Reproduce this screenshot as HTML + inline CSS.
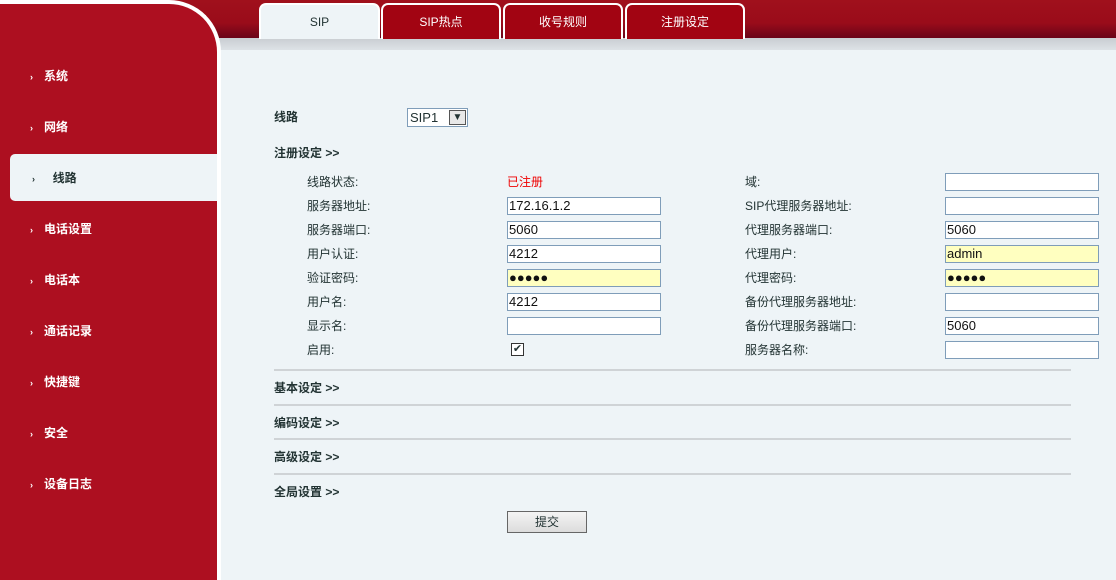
<!DOCTYPE html>
<html><head><meta charset="utf-8"><style>
*{margin:0;padding:0;box-sizing:border-box}
body{width:1116px;height:569px;overflow:hidden;position:relative;background:#eef4f7;font-family:"Liberation Sans","Noto Sans CJK SC",sans-serif;font-size:12px;color:#233;}
.top{position:absolute;left:0;top:0;width:1116px;height:38px;background:linear-gradient(#a0101c,#9a0c1a 60%,#6a0418);}
.band{position:absolute;left:0;top:38px;width:1116px;height:12px;background:linear-gradient(#c9cdd2,#dde2e6);}
.side{position:absolute;left:0;top:0;width:221px;height:580px;background:#ad0f20;border:4px solid #fff;border-left:none;border-bottom:none;border-top-right-radius:52px;}
.nav{position:absolute;left:30px;color:#fff;font-weight:bold;font-size:12px}
.nav b{font-size:9px;margin-right:11px}
.sel{position:absolute;left:10px;top:154px;width:207px;height:47px;background:#eef4f7;border-radius:5px 0 0 5px}
.tab{position:absolute;top:3px;height:36px;border:2px solid #fff;border-bottom:none;border-radius:7px 7px 0 0;background:#a20412;color:#fff;text-align:center;line-height:34px;font-size:12px}
.lbl{position:absolute;font-size:12px;color:#233}
.b{font-weight:bold}
.in{position:absolute;width:154px;height:18px;border:1px solid #7f9db9;background:#fff;font-size:13px;line-height:16px;padding-left:1px;color:#111}
.y{background:#ffffc0}
.hr{position:absolute;left:274px;width:797px;height:2px;background:#cfd3d6}
</style></head><body>
<div class="top"></div><div class="band"></div>
<div class="side"></div>
<div class="sel"></div>
<div class="nav" style="top:67px"><b>›</b>系统</div>
<div class="nav" style="top:118px"><b>›</b>网络</div>
<div class="nav" style="top:169px;left:32px;color:#233"><b>›</b>&nbsp;&nbsp;线路</div>
<div class="nav" style="top:220px"><b>›</b>电话设置</div>
<div class="nav" style="top:271px"><b>›</b>电话本</div>
<div class="nav" style="top:322px"><b>›</b>通话记录</div>
<div class="nav" style="top:373px"><b>›</b>快捷键</div>
<div class="nav" style="top:424px"><b>›</b>安全</div>
<div class="nav" style="top:475px"><b>›</b>设备日志</div>
<div class="tab" style="left:259px;width:121px;background:#eef4f7;color:#233;height:36px">SIP</div>
<div class="tab" style="left:381px;width:120px">SIP热点</div>
<div class="tab" style="left:503px;width:120px">收号规则</div>
<div class="tab" style="left:625px;width:120px">注册设定</div>
<div class="lbl b" style="left:274px;top:108px">线路</div>
<div style="position:absolute;left:407px;top:108px;width:61px;height:19px;border:1px solid #7f9db9;background:#fff;font-size:13px;line-height:17px;padding-left:2px">SIP1<span style="position:absolute;right:1px;top:1px;width:17px;height:15px;background:#e8e8e8;border:1px solid #555;font-size:10px;line-height:13px;text-align:center">▼</span></div>
<div class="lbl b" style="left:274px;top:144px">注册设定 &gt;&gt;</div>
<div class="lbl" style="left:307px;top:173px">线路状态:</div><div class="lbl" style="left:507px;top:173px;color:#e00">已注册</div>
<div class="lbl" style="left:307px;top:197px">服务器地址:</div><div class="in" style="left:507px;top:197px">172.16.1.2</div>
<div class="lbl" style="left:307px;top:221px">服务器端口:</div><div class="in" style="left:507px;top:221px">5060</div>
<div class="lbl" style="left:307px;top:245px">用户认证:</div><div class="in" style="left:507px;top:245px">4212</div>
<div class="lbl" style="left:307px;top:269px">验证密码:</div><div class="in y" style="left:507px;top:269px">●●●●●</div>
<div class="lbl" style="left:307px;top:293px">用户名:</div><div class="in" style="left:507px;top:293px">4212</div>
<div class="lbl" style="left:307px;top:317px">显示名:</div><div class="in" style="left:507px;top:317px"></div>
<div class="lbl" style="left:307px;top:341px">启用:</div>
<div style="position:absolute;left:511px;top:343px;width:13px;height:13px;border:1px solid #333;background:#fff;font-size:11px;line-height:11px;text-align:center">✔</div>
<div class="lbl" style="left:745px;top:173px">域:</div><div class="in" style="left:945px;top:173px"></div>
<div class="lbl" style="left:745px;top:197px">SIP代理服务器地址:</div><div class="in" style="left:945px;top:197px"></div>
<div class="lbl" style="left:745px;top:221px">代理服务器端口:</div><div class="in" style="left:945px;top:221px">5060</div>
<div class="lbl" style="left:745px;top:245px">代理用户:</div><div class="in y" style="left:945px;top:245px">admin</div>
<div class="lbl" style="left:745px;top:269px">代理密码:</div><div class="in y" style="left:945px;top:269px">●●●●●</div>
<div class="lbl" style="left:745px;top:293px">备份代理服务器地址:</div><div class="in" style="left:945px;top:293px"></div>
<div class="lbl" style="left:745px;top:317px">备份代理服务器端口:</div><div class="in" style="left:945px;top:317px">5060</div>
<div class="lbl" style="left:745px;top:341px">服务器名称:</div><div class="in" style="left:945px;top:341px"></div>
<div class="hr" style="top:369px"></div>
<div class="lbl b" style="left:274px;top:379px">基本设定 &gt;&gt;</div>
<div class="hr" style="top:404px"></div>
<div class="lbl b" style="left:274px;top:414px">编码设定 &gt;&gt;</div>
<div class="hr" style="top:438px"></div>
<div class="lbl b" style="left:274px;top:448px">高级设定 &gt;&gt;</div>
<div class="hr" style="top:473px"></div>
<div class="lbl b" style="left:274px;top:483px">全局设置 &gt;&gt;</div>
<div style="position:absolute;left:507px;top:511px;width:80px;height:22px;border:1px solid #666;background:linear-gradient(#f4f4f4,#dcdcdc);text-align:center;line-height:20px;font-size:12px">提交</div>
</body></html>
